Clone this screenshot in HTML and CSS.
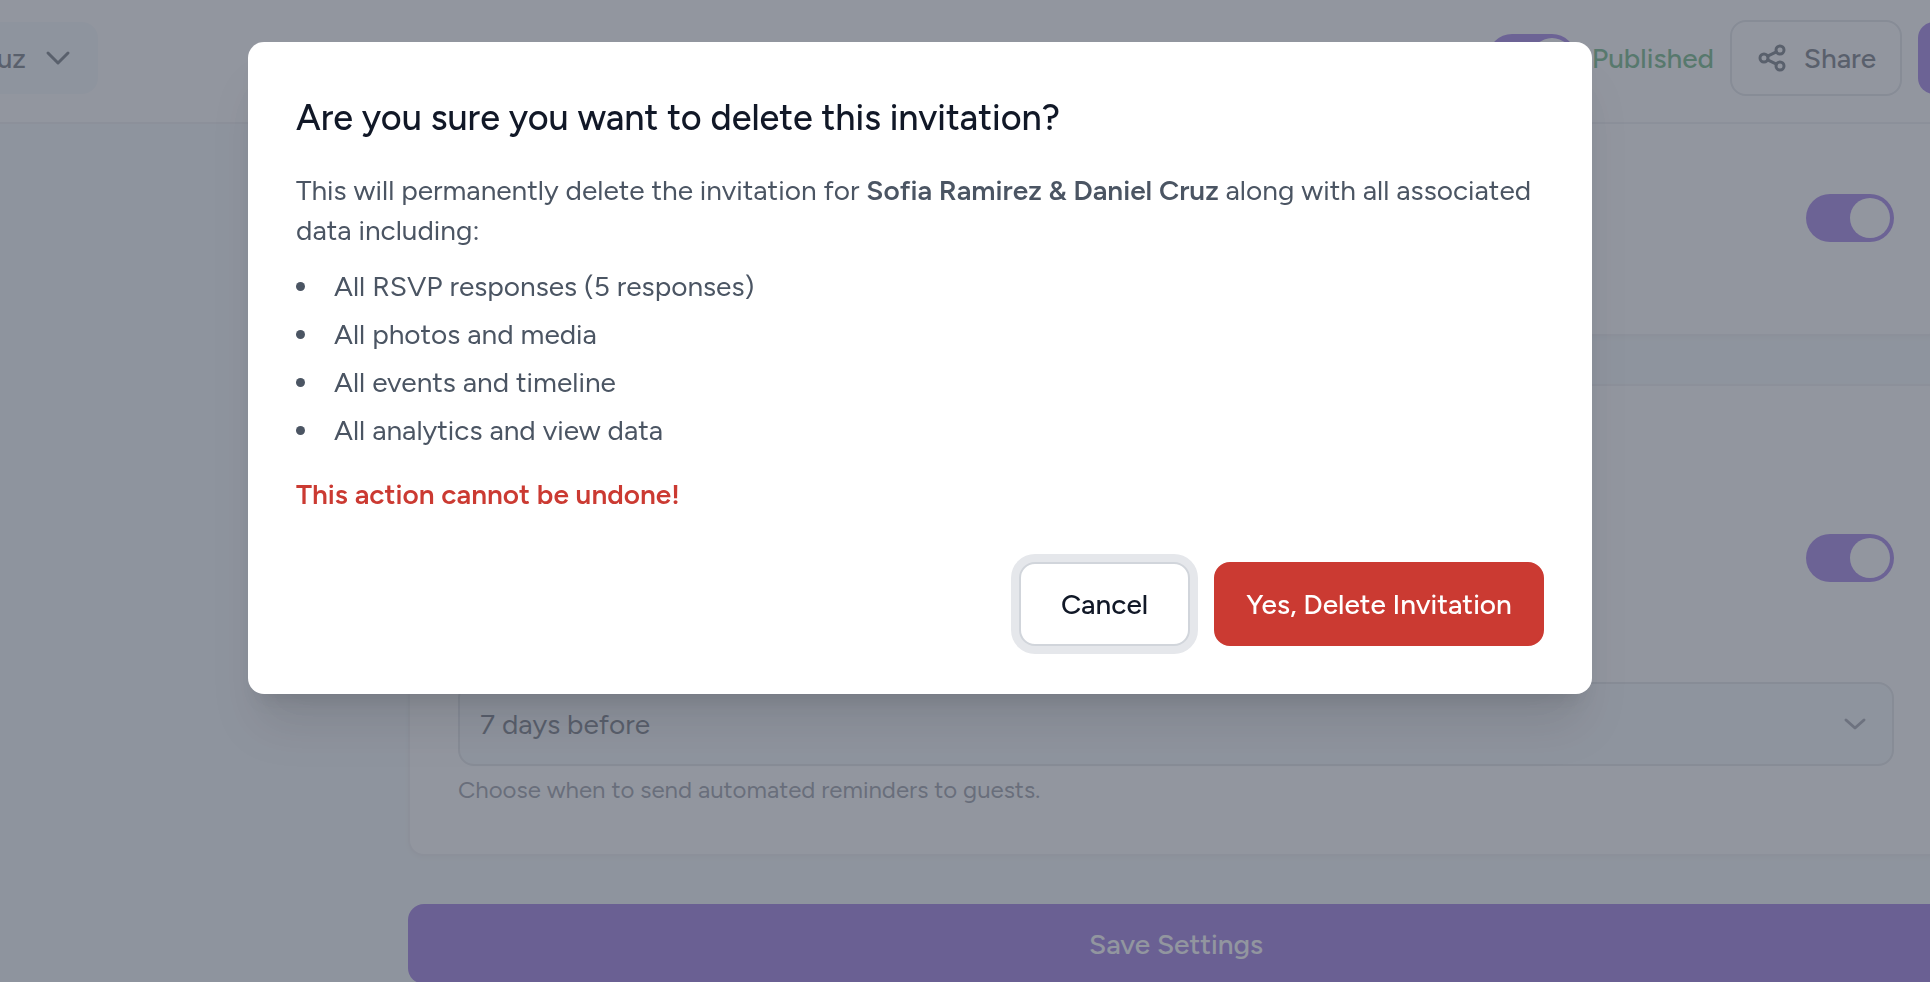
FILE: index.html
```html
<!DOCTYPE html>
<html lang="en">
<head>
    <meta charset="UTF-8">
    <meta name="viewport" content="width=device-width, initial-scale=1.0">
    <title>Invitation Settings</title>
    <link rel="stylesheet" href="styles.css">
</head>
<body>
    <!-- Top bar -->
    <header class="topbar">
        <button class="picker" type="button">
            <span>uz</span>
            <svg class="chevron" viewBox="0 0 32 32" aria-hidden="true"><path d="M6 11 L16 21 L26 11"/></svg>
        </button>

        <div class="actions">
            <label class="status">
                <input class="toggle" type="checkbox" checked>
                <span>Published</span>
            </label>
            <button class="share" type="button">
                <svg class="share-icon" viewBox="0 0 32 32" aria-hidden="true">
                    <circle cx="8" cy="16" r="4"/>
                    <circle cx="24" cy="8" r="4"/>
                    <circle cx="24" cy="24" r="4"/>
                    <path d="M11.6 14.2 L20.4 9.8 M11.6 17.8 L20.4 22.2"/>
                </svg>
                <span>Share</span>
            </button>
            <button class="primary" type="button" aria-label="Preview"></button>
        </div>
    </header>

    <!-- Settings cards -->
    <main class="settings">
        <section class="card card-first">
            <input class="toggle" type="checkbox" aria-label="RSVP" checked>
        </section>

        <section class="card card-reminders">
            <input class="toggle" type="checkbox" aria-label="Reminders" checked>
            <div class="field">
                <div class="select-wrap">
                    <select class="select" id="reminder" aria-label="Reminder time">
                        <option>7 days before</option>
                    </select>
                    <svg class="select-arrow" viewBox="0 0 32 32" aria-hidden="true"><path d="M7 12 L16 20 L25 12"/></svg>
                </div>
                <p class="hint">Choose when to send automated reminders to guests.</p>
            </div>
        </section>

        <button class="save" type="button">Save Settings</button>
    </main>

    <!-- Delete confirmation -->
    <div class="overlay">
        <div class="modal" role="dialog" aria-modal="true" aria-labelledby="modalTitle">
            <h2 id="modalTitle">Are you sure you want to delete this invitation?</h2>
            <p class="text">This will permanently delete the invitation for <strong>Sofia Ramirez &amp; Daniel Cruz</strong> along with all associated data including:</p>
            <ul class="list">
                <li>All RSVP responses (5 responses)</li>
                <li>All photos and media</li>
                <li>All events and timeline</li>
                <li>All analytics and view data</li>
            </ul>
            <p class="warning">This action cannot be undone!</p>
            <div class="buttons">
                <button class="cancel" type="button">Cancel</button>
                <button class="delete" type="button">Yes, Delete Invitation</button>
            </div>
        </div>
    </div>
</body>
</html>
```

FILE: styles.css
```css
/* Global Styles */
* {
    box-sizing: border-box;
}

body {
    margin: 0;
    min-height: 100vh;
    overflow: hidden;
    background: #f0f6f9;
    color: #1f2937;
    font-family: Figtree, Lato, sans-serif;
    font-size: 28px;
    line-height: 40px;
}

button,
select {
    font: inherit;
    color: inherit;
    cursor: pointer;
}

h2,
p,
ul {
    margin: 0;
    padding: 0;
}

svg {
    fill: none;
    stroke: currentColor;
    stroke-width: 3;
    stroke-linecap: round;
    stroke-linejoin: round;
}

/* Top bar */
.topbar {
    display: flex;
    justify-content: space-between;
    align-items: flex-start;
    height: 124px;
    padding-top: 20px;
    overflow: hidden;
    background: #fff;
    border-bottom: 2px solid #e5e7eb;
}

.picker {
    display: flex;
    justify-content: flex-end;
    align-items: center;
    gap: 16px;
    width: 118px;
    height: 72px;
    margin: 2px 0 0 -20px;
    padding: 0 24px 0 0;
    border: 0;
    border-radius: 16px;
    background: #f0f6f9;
    font-weight: 500;
}

.chevron {
    width: 32px;
    height: 32px;
}

.actions {
    display: flex;
    align-items: center;
    gap: 16px;
    margin-right: -148px;
}

.status {
    display: flex;
    align-items: center;
    gap: 16px;
    color: #158a3a;
    font-weight: 500;
}

.share {
    display: flex;
    justify-content: center;
    align-items: center;
    gap: 16px;
    width: 172px;
    height: 76px;
    padding: 0;
    border: 2px solid #d1d5db;
    border-radius: 16px;
    background: #fff;
    font-weight: 500;
}

.share-icon {
    width: 32px;
    height: 32px;
}

.primary {
    width: 160px;
    height: 72px;
    border: 0;
    border-radius: 16px;
    background: #6a34d8;
}

/* Toggle switch */
.toggle {
    appearance: none;
    display: block;
    flex: none;
    width: 88px;
    height: 48px;
    margin: 0;
    padding: 4px;
    border-radius: 24px;
    background: #6a34d8;
}

.toggle::before {
    content: "";
    display: block;
    width: 40px;
    height: 40px;
    margin-left: auto;
    border-radius: 50%;
    background: #fff;
}

/* Settings cards */
.settings {
    display: flex;
    flex-direction: column;
    gap: 48px;
    margin: 0 -14px 0 408px;
}

.card {
    display: flex;
    flex-direction: column;
    align-items: flex-end;
    padding: 48px;
    border: 2px solid #e5e7eb;
    border-radius: 16px;
    background: #fff;
    box-shadow: 0 2px 4px rgba(0, 0, 0, 0.05);
}

.card-first {
    padding: 70px 48px 92px;
    border-top: 0;
    border-radius: 0 0 16px 16px;
}

.card-reminders {
    gap: 100px;
    padding-top: 148px;
}

.field {
    width: 100%;
}

.select-wrap {
    position: relative;
}

.select {
    display: block;
    appearance: none;
    width: 100%;
    height: 84px;
    padding: 0 20px;
    border: 2px solid #d1d5db;
    border-radius: 16px;
    background: #f0f6f9;
}

.select-arrow {
    position: absolute;
    top: 26px;
    right: 23px;
    width: 32px;
    height: 32px;
    color: #6b7280;
}

.hint {
    margin-top: 8px;
    color: #5b6270;
    font-size: 24px;
    line-height: 32px;
}

.save {
    height: 80px;
    border: 0;
    border-radius: 16px;
    background: #6029d0;
    color: #fff;
    font-weight: 500;
}

/* Modal */
.overlay {
    position: fixed;
    inset: 0;
    display: flex;
    justify-content: center;
    align-items: flex-start;
    padding: 42px 90px 42px 0;
    background: rgba(109, 115, 127, 0.75);
}

.modal {
    width: 1344px;
    max-width: 100%;
    padding: 48px;
    border-radius: 16px;
    background: #fff;
    color: #4b5563;
    box-shadow: 0 40px 50px -10px rgba(0, 0, 0, 0.1), 0 16px 20px -12px rgba(0, 0, 0, 0.1);
}

.modal h2 {
    color: #111827;
    font-size: 36px;
    font-weight: 500;
    line-height: 56px;
}

.text {
    margin-top: 24px;
}

.text strong {
    font-weight: 600;
}

.list {
    display: flex;
    flex-direction: column;
    gap: 8px;
    margin-top: 16px;
    list-style: none;
}

.list li {
    display: flex;
    align-items: center;
    gap: 29px;
}

.list li::before {
    content: "";
    width: 9px;
    height: 9px;
    border-radius: 50%;
    background: currentColor;
}

.warning {
    margin-top: 24px;
    color: #cb3a32;
    font-weight: 600;
}

.buttons {
    display: flex;
    justify-content: flex-end;
    gap: 24px;
    margin-top: 48px;
}

.buttons button {
    height: 84px;
    padding: 0 30px;
    border: 2px solid #cb3a32;
    border-radius: 16px;
    font-weight: 500;
}

.buttons .cancel {
    min-width: 171px;
    border-color: #d1d5db;
    background: #fff;
    color: #111827;
    box-shadow: 0 0 0 8px #e5e7eb;
}

.buttons .delete {
    min-width: 330px;
    background: #cb3a32;
    color: #fff;
}
```
